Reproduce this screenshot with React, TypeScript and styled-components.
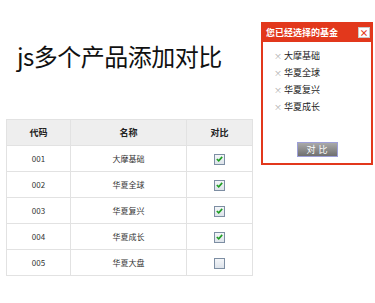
import styled, { createGlobalStyle } from "styled-components";

const GlobalStyle = createGlobalStyle`
  html, body {
    margin: 0;
    padding: 0;
    background: #ffffff;
    font-family: "Noto Sans CJK SC", "Noto Sans", sans-serif;
  }
`

const Page = styled.div`
  position: relative;
  width: 375px;
  height: 303px;
  overflow: hidden;
  padding: 42px 0 0 6px;
  box-sizing: border-box;
`

const Title = styled.h1`
  margin: 0 0 49px 11px;
  font-size: 24px;
  line-height: 28px;
  font-weight: 400;
  color: #111;
  letter-spacing: -0.5px;
`

const FundTable = styled.table`
  width: 246px;
  table-layout: fixed;
  border-collapse: collapse;
  font-size: 8px;
  color: #333;
`

const HeadRow = styled.tr`
  height: 26px;
  background: #eeeeee;
`

const HeadCell = styled.th<{ width: number }>`
  width: ${({ width }) => width}px;
  box-sizing: border-box;
  border: 1px solid #e2e2e2;
  padding: 0;
  text-align: center;
  font-size: 9px;
  font-weight: 700;
  color: #222;
`

const Row = styled.tr`
  height: 26px;
`

const Cell = styled.td`
  border: 1px solid #e2e2e2;
  padding: 0;
  text-align: center;
`

const Check = styled.span<{ checked: boolean }>`
  display: inline-flex;
  align-items: center;
  justify-content: center;
  width: 9px;
  height: 9px;
  border: 1px solid #7d8ea3;
  background: linear-gradient(#f4f6f9, #dde3ea);
  vertical-align: middle;
  & svg {
    display: ${({ checked }) => (checked ? "block" : "none")};
  }
`

const Panel = styled.div`
  position: absolute;
  left: 261px;
  top: 22px;
  width: 112px;
  height: 143px;
  box-sizing: border-box;
  border: 2px solid #e2381c;
  border-top: none;
  background: #fff;
  display: flex;
  flex-direction: column;
`

const PanelHead = styled.div`
  height: 20px;
  margin: 0 -2px;
  padding: 0 3px 0 5px;
  background: #e2381c;
  display: flex;
  align-items: center;
  justify-content: space-between;
  color: #fff;
  font-size: 9px;
  font-weight: 700;
`

const Close = styled.span`
  width: 10px;
  height: 9px;
  background: #fff;
  border: 1px solid #c9c9c9;
  display: flex;
  align-items: center;
  justify-content: center;
  color: #e2381c;
  font-size: 9px;
  line-height: 9px;
  font-weight: 700;
`

const List = styled.ul`
  list-style: none;
  margin: 0;
  padding: 6px 0 0 11px;
  display: flex;
  flex-direction: column;
  gap: 3px;
  flex: 1;
`

const Item = styled.li`
  display: flex;
  align-items: center;
  gap: 4px;
  height: 14px;
  font-size: 9px;
  color: #222;
`

const Remove = styled.span`
  color: #aaa;
  font-size: 8px;
  width: 6px;
`

const CompareButton = styled.button`
  align-self: center;
  margin: 0 0 6px 0;
  width: 41px;
  height: 15px;
  padding: 0;
  border: 1px solid #9d9fd8;
  background: linear-gradient(#a9a9a9, #6f6f6f);
  color: #fff;
  font-family: inherit;
  font-size: 9px;
  letter-spacing: 3px;
  text-indent: 3px;
  line-height: 13px;
`

const funds = [
  { code: "001", name: "大摩基础", checked: true },
  { code: "002", name: "华夏全球", checked: true },
  { code: "003", name: "华夏复兴", checked: true },
  { code: "004", name: "华夏成长", checked: true },
  { code: "005", name: "华夏大盘", checked: false },
]

const CheckMark = () => (
  <svg width="7" height="6" viewBox="0 0 7 6">
    <path d="M0.8 3 L2.7 4.8 L6.2 0.9" stroke="#1f9e23" strokeWidth="1.6" fill="none" />
  </svg>
)

export default function App() {
  const selected = funds.filter(f => f.checked)
  return (
    <>
      <GlobalStyle />
      <Page>
        <Title>js多个产品添加对比</Title>
        <FundTable>
          <thead>
            <HeadRow>
              <HeadCell width={64}>代码</HeadCell>
              <HeadCell width={116}>名称</HeadCell>
              <HeadCell width={66}>对比</HeadCell>
            </HeadRow>
          </thead>
          <tbody>
            {funds.map(f => (
              <Row key={f.code}>
                <Cell>{f.code}</Cell>
                <Cell>{f.name}</Cell>
                <Cell>
                  <Check checked={f.checked}>
                    <CheckMark />
                  </Check>
                </Cell>
              </Row>
            ))}
          </tbody>
        </FundTable>
        <Panel>
          <PanelHead>
            您已经选择的基金
            <Close>×</Close>
          </PanelHead>
          <List>
            {selected.map(f => (
              <Item key={f.code}>
                <Remove>×</Remove>
                {f.name}
              </Item>
            ))}
          </List>
          <CompareButton>对比</CompareButton>
        </Panel>
      </Page>
    </>
  )
}
